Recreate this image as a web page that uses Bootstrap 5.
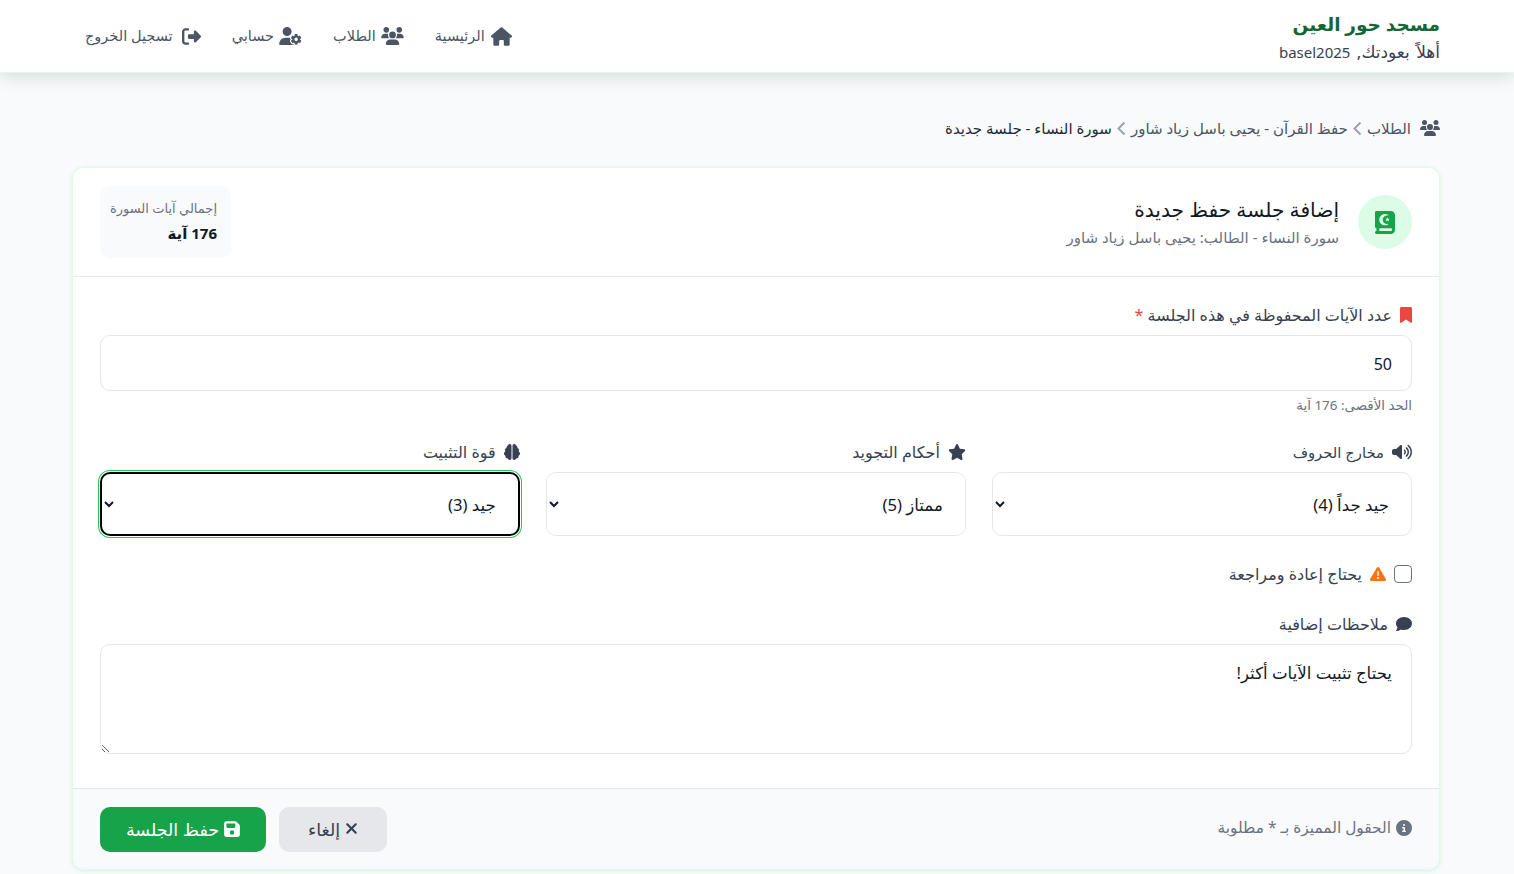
<!DOCTYPE html>
<html lang="ar" dir="rtl">
<head>
<meta charset="utf-8">
<title>إضافة جلسة حفظ جديدة</title>
<link href="https://cdn.jsdelivr.net/npm/bootstrap@5.3.0/dist/css/bootstrap.min.css" rel="stylesheet">
<style>
html,body{height:874px;overflow:hidden}
body{background:#f9fafb;font-family:"Noto Sans","Open Sans","DejaVu Sans",sans-serif;color:#374151;font-size:14px}
.ic{fill:currentColor;display:block;flex:none}
.topbar{height:73px;background:#fff;border-bottom:1px solid #dcfce7;box-shadow:0 4px 16px rgba(0,0,0,.13);padding:0 74px 0 73px;position:relative;z-index:2}
.brand-name{font-size:18.500px;line-height:26px;font-weight:600;color:#166534;margin:0}
.brand-sub{font-size:17px;line-height:20px;color:#374151;margin-top:5px;word-spacing:2px}
.brand-sub bdi{font-size:15px}
.top-nav{gap:31px;padding-left:12px}
.top-link{color:#4b5563;font-size:14.500px;text-decoration:none;gap:5px}
.top-link.home{gap:6px}
.top-link.out{gap:9px}
.wrap{padding:0 74px 0 72px}
.crumbs{height:94px;padding-top:16px;font-size:15px;line-height:20px;color:#4b5563;gap:5px}
.crumbs .lead-ic{margin-left:4px}
.crumbs .cur{color:#1f2937}
.main-card{border:1px solid #dcfce7;border-radius:12px;background:#fff;box-shadow:0 1px 4px rgba(34,197,94,.16);height:703px;overflow:hidden}
.main-head{background:#fff;border-bottom:1px solid #e5e7eb;padding:18px 27px;height:109px}
.icon-disc{width:54px;height:54px;border-radius:50%;background:#dcfce7;color:#16a34a}
.head-gap{gap:19px}
.head-text{padding-bottom:2px}
.head-title{font-size:20.200px;line-height:28px;font-weight:500;color:#111827;margin:0}
.head-sub{font-size:15px;line-height:20px;color:#6b7280;margin-top:4px}
.stat-box{width:131px;height:72px;border-radius:10px;background:#f9fafb;padding:12px 14px 12px 8px}
.stat-label{font-size:13px;line-height:20px;color:#6b7280}
.stat-val{font-size:15px;line-height:20px;font-weight:700;color:#111827;margin-top:5px}
.main-body{padding:28px 27px 0;height:513px}
.fld-label{font-size:16px;line-height:20px;color:#374151;margin:0 0 10px;gap:8px}
.fld-label.tight{font-size:14.800px}
.req{color:#ef4444}
.fld-input{height:56px;border:1px solid #e5e7eb;border-radius:10px;font-size:16px;color:#111827;padding:1px 19px 0;box-shadow:none}
.hint{font-size:13.400px;line-height:16px;color:#6b7280;margin:6px 0 29px}
.trio{--bs-gutter-x:26.500px;margin-bottom:28px}
.fld-select{height:64px;border:1px solid #e5e7eb;border-radius:10px;font-size:16.600px;color:#111827;background-color:#fff;background-image:none;padding:0 18px;appearance:auto;-webkit-appearance:auto;box-shadow:none}
.fld-select.is-on{border:2px solid #000;box-shadow:0 0 0 1px #fff,0 0 0 2px #22c55e}
.chk{width:18px;height:18px;margin:0;float:none;border:1px solid #6b7280;border-radius:3px}
.chk-line{gap:8px;height:20px;margin-bottom:30px;font-size:16px}
.fld-area{height:110px;border:1px solid #e5e7eb;border-radius:10px;font-size:16.600px;color:#111827;padding:16px 19px;box-shadow:none}
.main-foot{height:81px;background:#f9fafb;border-top:1px solid #e5e7eb;padding:18px 27px 0}
.foot-note{color:#6b7280;font-size:15.400px;gap:5px;margin-top:9px}
.act-row{gap:13px}
.act{height:45px;border-radius:10px;font-size:17.500px;gap:5px;border:0;padding:0 0 2px}
.act-cancel{width:108px;background:#e5e7eb;color:#374151}
.act-save{width:166px;background:#16a34a;color:#fff}
</style>
</head>
<body>
<nav class="navbar topbar d-flex justify-content-between align-items-center flex-nowrap">
  <div>
    <h1 class="brand-name">مسجد حور العين</h1>
    <div class="brand-sub">أهلاً بعودتك, <bdi>basel2025</bdi></div>
  </div>
  <div class="d-flex align-items-center top-nav">
    <a href="#" class="d-flex align-items-center top-link home"><svg class="ic" width="21" height="19" viewBox="0 0 576 512"><path d="M575.8 255.500c0 18-15 32.100-32 32.100h-32l.7 160.200c0 2.700-.2 5.400-.5 8.100V472c0 22.100-17.900 40-40 40H456c-1.100 0-2.200 0-3.300-.1c-1.400 .1-2.800 .1-4.200 .1H416 392c-22.100 0-40-17.900-40-40V448 384c0-17.700-14.300-32-32-32H256c-17.700 0-32 14.300-32 32v64 24c0 22.100-17.900 40-40 40H160 128.100c-1.500 0-3-.1-4.500-.2c-1.200 .1-2.400 .2-3.600 .2H104c-22.100 0-40-17.900-40-40V360c0-.9 0-1.900 .1-2.800V287.600H32c-18 0-32-14-32-32.100c0-9 3-17 10-24L266.400 8c7-7 15-8 22-8s15 2 21 7L564.800 231.500c8 7 12 15 11 24z"/></svg>الرئيسية</a>
    <a href="#" class="d-flex align-items-center top-link"><svg class="ic" width="23" height="18" viewBox="0 0 640 512"><path d="M144 0a80 80 0 1 1 0 160A80 80 0 1 1 144 0zM512 0a80 80 0 1 1 0 160A80 80 0 1 1 512 0zM0 298.700C0 239.800 47.800 192 106.700 192h42.700c15.900 0 31 3.500 44.600 9.700c-1.300 7.200-1.900 14.700-1.900 22.300c0 38.200 16.800 72.500 43.300 96c-.2 0-.4 0-.7 0H21.300C9.600 320 0 310.400 0 298.700zM405.300 320c-.2 0-.4 0-.7 0c26.600-23.500 43.300-57.800 43.300-96c0-7.600-.7-15-1.900-22.300c13.600-6.300 28.700-9.700 44.600-9.700h42.700C592.200 192 640 239.800 640 298.700c0 11.800-9.600 21.300-21.300 21.300H405.300zM224 224a96 96 0 1 1 192 0 96 96 0 1 1 -192 0zM128 485.300C128 411.700 187.700 352 261.300 352H378.700C452.300 352 512 411.700 512 485.300c0 14.700-11.900 26.700-26.700 26.700H154.700c-14.700 0-26.700-11.900-26.700-26.700z"/></svg>الطلاب</a>
    <a href="#" class="d-flex align-items-center top-link"><svg class="ic" width="23" height="18" viewBox="0 0 640 512"><path d="M224 0a128 128 0 1 1 0 256A128 128 0 1 1 224 0zM178.300 304h91.400c11.800 0 23.400 1.200 34.500 3.300c-2.100 18.500 7.400 35.600 21.800 44.800c-16.600 10.600-26.700 31.600-20 53.300c4 12.900 9.400 25.500 16.400 37.600s15.200 23.100 24.400 33c15.700 16.900 39.600 18.400 57.200 8.700v.9c0 9.200 2.700 18.500 7.900 26.300H29.700C13.300 512 0 498.700 0 482.300C0 383.800 79.800 304 178.300 304zM436 218.200c0-7 4.500-13.300 11.300-14.800c10.500-2.400 21.500-3.700 32.700-3.700s22.200 1.300 32.700 3.700c6.800 1.500 11.300 7.800 11.300 14.800v30.600c7.900 3.400 15.400 7.700 22.300 12.800l24.900-14.300c6-3.400 13.500-2.500 18.300 2.500c7.600 8.100 14.300 17.200 20.100 27.200s10.300 20.400 13.500 31c2 6.600-1.100 13.600-7.100 17l-24.900 14.300c.4 4 .7 8.100 .7 12.300s-.2 8.200-.7 12.300l24.900 14.300c6 3.400 9.100 10.400 7.100 17c-3.200 10.600-7.700 21-13.500 31s-12.500 19.100-20.100 27.200c-4.800 5.100-12.300 5.900-18.300 2.500l-24.900-14.300c-6.900 5.100-14.300 9.400-22.300 12.800l0 30.600c0 7-4.500 13.300-11.300 14.800c-10.500 2.400-21.500 3.700-32.700 3.700s-22.200-1.300-32.700-3.700c-6.800-1.500-11.300-7.800-11.300-14.800V454.800c-8-3.400-15.600-7.700-22.500-12.900l-24.700 14.300c-6 3.400-13.500 2.500-18.300-2.500c-7.600-8.100-14.300-17.200-20.100-27.200s-10.300-20.400-13.500-31c-2-6.600 1.100-13.600 7.100-17l24.800-14.300c-.4-4.100-.7-8.200-.7-12.400s.2-8.300 .7-12.400L343.800 325c-6-3.400-9.100-10.400-7.100-17c3.200-10.600 7.700-21 13.500-31s12.500-19.100 20.100-27.200c4.800-5.100 12.300-5.900 18.300-2.500l24.800 14.300c6.900-5.100 14.500-9.400 22.500-12.900V218.200zm92.100 133.500a48.100 48.100 0 1 0 -96.100 0 48.100 48.100 0 1 0 96.100 0z"/></svg>حسابي</a>
    <a href="#" class="d-flex align-items-center top-link out"><svg class="ic" width="19" height="19" viewBox="0 0 512 512"><path d="M377.900 105.900L500.700 228.700c7.200 7.200 11.300 17.100 11.300 27.300s-4.100 20.100-11.300 27.300L377.900 406.100c-6.400 6.400-15 9.900-24 9.900c-18.700 0-33.900-15.200-33.900-33.900l0-62.100-128 0c-17.700 0-32-14.300-32-32l0-64c0-17.700 14.300-32 32-32l128 0 0-62.100c0-18.700 15.200-33.900 33.900-33.900c9 0 17.600 3.600 24 9.900zM160 96L96 96c-17.700 0-32 14.300-32 32l0 256c0 17.700 14.300 32 32 32l64 0c17.700 0 32 14.300 32 32s-14.300 32-32 32l-64 0c-53 0-96-43-96-96L0 128C0 75 43 32 96 32l64 0c17.700 0 32 14.300 32 32s-14.300 32-32 32z"/></svg>تسجيل الخروج</a>
  </div>
</nav>
<div class="wrap">
  <div class="d-flex align-items-center crumbs">
    <svg class="ic lead-ic" width="20" height="16" viewBox="0 0 640 512"><path d="M144 0a80 80 0 1 1 0 160A80 80 0 1 1 144 0zM512 0a80 80 0 1 1 0 160A80 80 0 1 1 512 0zM0 298.700C0 239.800 47.800 192 106.700 192h42.700c15.900 0 31 3.500 44.600 9.700c-1.300 7.200-1.900 14.700-1.900 22.300c0 38.200 16.800 72.500 43.300 96c-.2 0-.4 0-.7 0H21.300C9.600 320 0 310.400 0 298.700zM405.300 320c-.2 0-.4 0-.7 0c26.600-23.500 43.300-57.800 43.300-96c0-7.600-.7-15-1.900-22.300c13.600-6.300 28.700-9.700 44.600-9.700h42.700C592.200 192 640 239.800 640 298.700c0 11.800-9.600 21.300-21.300 21.300H405.300zM224 224a96 96 0 1 1 192 0 96 96 0 1 1 -192 0zM128 485.300C128 411.700 187.700 352 261.300 352H378.700C452.300 352 512 411.700 512 485.300c0 14.700-11.900 26.700-26.700 26.700H154.700c-14.700 0-26.700-11.900-26.700-26.700z"/></svg>
    <span>الطلاب</span>
    <svg width="9" height="15" viewBox="0 0 9 15" fill="none" stroke="#9ca3af" stroke-width="2"><path d="M7.5 1.5L1.5 7.5l6 6"/></svg>
    <span>حفظ القرآن - يحيى باسل زياد شاور</span>
    <svg width="9" height="15" viewBox="0 0 9 15" fill="none" stroke="#9ca3af" stroke-width="2"><path d="M7.5 1.5L1.5 7.5l6 6"/></svg>
    <span class="cur">سورة النساء - جلسة جديدة</span>
  </div>

  <div class="card main-card">
    <div class="card-header main-head d-flex justify-content-between align-items-center rounded-0">
      <div class="d-flex align-items-center head-gap">
        <div class="icon-disc d-flex align-items-center justify-content-center">
          <svg class="ic" width="20" height="23" viewBox="0 0 448 512"><path d="M352 0c53 0 96 43 96 96V416c0 53-43 96-96 96H64 32c-17.700 0-32-14.300-32-32s14.300-32 32-32V384c-17.700 0-32-14.300-32-32V32C0 14.300 14.300 0 32 0H64 352zm0 384H96v64H352c17.700 0 32-14.300 32-32s-14.300-32-32-32zM274.100 150.200l-8.900 21.400-23.100 1.900c-5.700 .5-8 7.500-3.700 11.200L256 199.800l-5.400 22.600c-1.300 5.500 4.700 9.900 9.600 6.900L280 217.200l19.800 12.100c4.900 3 10.900-1.400 9.600-6.900L304 199.800l17.600-15.100c4.300-3.700 2-10.800-3.700-11.200l-23.100-1.900-8.900-21.400c-2.200-5.300-9.600-5.300-11.800 0zM96 192c0 70.700 57.300 128 128 128c25.600 0 49.500-7.500 69.500-20.500c3.200-2.100 4.500-6.200 3.100-9.700s-5.200-5.600-9-4.800c-6.100 1.200-12.500 1.900-19 1.900c-52.400 0-94.900-42.500-94.900-94.900s42.500-94.900 94.900-94.900c6.500 0 12.800 .7 19 1.900c3.800 .8 7.500-1.300 9-4.800s.2-7.600-3.100-9.700C273.500 71.500 249.600 64 224 64C153.300 64 96 121.300 96 192z"/></svg>
        </div>
        <div class="head-text">
          <h2 class="head-title">إضافة جلسة حفظ جديدة</h2>
          <div class="head-sub">سورة النساء - الطالب: يحيى باسل زياد شاور</div>
        </div>
      </div>
      <div class="stat-box">
        <div class="stat-label text-nowrap">إجمالي آيات السورة</div>
        <div class="stat-val">176 آية</div>
      </div>
    </div>

    <div class="card-body main-body">
      <label class="form-label d-flex align-items-center fld-label" for="f1">
        <svg class="ic" width="12" height="16" viewBox="0 0 384 512"><path fill="#ef4444" d="M0 48V487.700C0 501.100 10.900 512 24.300 512c5 0 9.900-1.500 14-4.400L192 400 345.700 507.600c4.100 2.900 9 4.400 14 4.400c13.400 0 24.300-10.900 24.300-24.300V48c0-26.500-21.500-48-48-48H48C21.500 0 0 21.500 0 48z"/></svg>
        <span>عدد الآيات المحفوظة في هذه الجلسة <span class="req">*</span></span>
      </label>
      <input id="f1" class="form-control fld-input" type="text" value="50">
      <div class="hint">الحد الأقصى: 176 آية</div>

      <div class="row trio">
        <div class="col-4">
          <label class="form-label d-flex align-items-center fld-label tight"><svg class="ic" width="20" height="16" viewBox="0 0 640 512"><path d="M533.600 32.500C598.500 85.200 640 165.800 640 256s-41.500 170.700-106.400 223.500c-10.300 8.400-25.400 6.800-33.800-3.500s-6.800-25.400 3.500-33.800C557.500 398.200 592 331.200 592 256s-34.500-142.200-88.700-186.300c-10.300-8.400-11.800-23.500-3.500-33.800s23.500-11.800 33.800-3.500zM473.100 107c43.200 35.200 70.900 88.900 70.900 149s-27.700 113.800-70.900 149c-10.300 8.400-25.400 6.800-33.800-3.500s-6.800-25.400 3.500-33.800C475.300 341.300 496 301.100 496 256s-20.700-85.300-53.200-111.800c-10.300-8.400-11.800-23.500-3.500-33.800s23.500-11.800 33.800-3.500zm-60.500 74.500C434.100 199.100 448 225.900 448 256s-13.900 56.900-35.400 74.500c-10.300 8.400-25.400 6.800-33.800-3.500s-6.800-25.400 3.500-33.800C393.100 284.400 400 271 400 256s-6.900-28.400-17.700-37.300c-10.300-8.400-11.800-23.500-3.500-33.800s23.500-11.800 33.800-3.500zM301.100 34.800C312.600 40 320 51.400 320 64V448c0 12.600-7.400 24-18.900 29.200s-25 3.100-34.400-5.300L131.800 352H64c-35.300 0-64-28.700-64-64V224c0-35.300 28.700-64 64-64h67.800L266.700 40.100c9.400-8.400 22.900-10.400 34.400-5.300z"/></svg>مخارج الحروف</label>
          <select class="form-select fld-select"><option>جيد جداً (4)</option></select>
        </div>
        <div class="col-4">
          <label class="form-label d-flex align-items-center fld-label"><svg class="ic" width="18" height="16" viewBox="0 0 576 512"><path d="M316.900 18C311.600 7 300.400 0 288.100 0s-23.400 7-28.800 18L195 150.300 51.400 171.500c-12 1.800-22 10.200-25.700 21.700s-.7 24.200 7.900 32.700L137.800 329 113.200 474.700c-2 12 3 24.200 12.900 31.300s23 8 33.800 2.300l128.300-68.500 128.300 68.500c10.800 5.700 23.900 4.900 33.800-2.300s14.900-19.300 12.900-31.300L438.500 329 542.700 225.900c8.600-8.500 11.700-21.200 7.900-32.700s-13.700-19.900-25.700-21.700L381.200 150.300 316.900 18z"/></svg>أحكام التجويد</label>
          <select class="form-select fld-select"><option>ممتاز (5)</option></select>
        </div>
        <div class="col-4">
          <label class="form-label d-flex align-items-center fld-label"><svg class="ic" width="16" height="16" viewBox="0 0 512 512"><path d="M184 0c30.900 0 56 25.100 56 56V456c0 30.900-25.100 56-56 56c-28.900 0-52.700-21.900-55.700-50.100c-5.200 1.400-10.700 2.100-16.300 2.100c-35.300 0-64-28.700-64-64c0-7.400 1.300-14.600 3.600-21.200C21.400 367.400 0 338.200 0 304c0-31.900 18.700-59.500 45.800-72.300C37.100 220.800 32 207 32 192c0-30.700 21.600-56.300 50.400-62.600C80.800 123.900 80 118 80 112c0-29.900 20.600-55.100 48.300-62.100C131.300 21.900 155.100 0 184 0zM328 0c28.900 0 52.600 21.900 55.700 49.900c27.800 7 48.300 32.100 48.300 62.100c0 6-.8 11.900-2.400 17.400c28.800 6.200 50.400 31.900 50.400 62.600c0 15-5.100 28.800-13.800 39.700C493.300 244.500 512 272.100 512 304c0 34.200-21.400 63.400-51.600 74.800c2.300 6.600 3.600 13.800 3.600 21.200c0 35.300-28.700 64-64 64c-5.600 0-11.100-.7-16.300-2.100c-3 28.200-26.800 50.100-55.700 50.100c-30.900 0-56-25.100-56-56V56c0-30.900 25.100-56 56-56z"/></svg>قوة التثبيت</label>
          <select class="form-select fld-select is-on"><option>جيد (3)</option></select>
        </div>
      </div>

      <div class="d-flex align-items-center chk-line">
        <input class="form-check-input chk" type="checkbox" id="f2">
        <label for="f2" class="d-flex align-items-center gap-2">
          <svg class="ic" width="16" height="16" viewBox="0 0 512 512"><path fill="#f97316" d="M256 32c14.200 0 27.300 7.500 34.500 19.800l216 368c7.300 12.400 7.300 27.700 .2 40.100S486.300 480 472 480H40c-14.300 0-27.600-7.700-34.700-20.100s-7-27.800 .2-40.100l216-368C228.700 39.500 241.800 32 256 32zm0 128c-13.300 0-24 10.700-24 24V296c0 13.300 10.700 24 24 24s24-10.700 24-24V184c0-13.300-10.700-24-24-24zm32 224a32 32 0 1 0 -64 0 32 32 0 1 0 64 0z"/></svg>
          <span>يحتاج إعادة ومراجعة</span>
        </label>
      </div>

      <label class="form-label d-flex align-items-center fld-label" for="f3"><svg class="ic" width="16" height="16" viewBox="0 0 512 512"><path d="M512 240c0 114.900-114.600 208-256 208c-37.100 0-72.300-6.400-104.100-17.900c-11.900 8.700-31.300 20.600-54.300 30.600C73.600 471.100 44.700 480 16 480c-6.500 0-12.300-3.900-14.800-9.900c-2.500-6-1.100-12.800 3.400-17.400l.3-.3c.3-.3 .7-.7 1.300-1.400c1.100-1.200 2.800-3.100 4.900-5.700c4.100-5 9.600-12.400 15.200-21.600c10-16.600 19.500-38.400 21.400-62.900C17.700 326.800 0 285.100 0 240C0 125.100 114.600 32 256 32s256 93.100 256 208z"/></svg>ملاحظات إضافية</label>
      <textarea id="f3" class="form-control fld-area">يحتاج تثبيت الآيات أكثر!</textarea>
    </div>

    <div class="card-footer main-foot d-flex justify-content-between align-items-start rounded-0">
      <div class="d-flex align-items-center foot-note">
        <svg class="ic" width="16" height="16" viewBox="0 0 512 512"><path d="M256 512A256 256 0 1 0 256 0a256 256 0 1 0 0 512zM216 336h24V272H216c-13.300 0-24-10.700-24-24s10.700-24 24-24h48c13.300 0 24 10.700 24 24v88h8c13.300 0 24 10.700 24 24s-10.700 24-24 24H216c-13.300 0-24-10.700-24-24s10.700-24 24-24zm40-208a32 32 0 1 1 0 64 32 32 0 1 1 0-64z"/></svg>
        <span>الحقول المميزة بـ * مطلوبة</span>
      </div>
      <div class="d-flex act-row">
        <button class="btn act act-cancel d-flex align-items-center justify-content-center" type="button"><svg class="ic" width="13" height="17" viewBox="0 0 384 512"><path d="M342.600 150.600c12.500-12.500 12.500-32.800 0-45.300s-32.800-12.500-45.300 0L192 210.700 86.600 105.400c-12.500-12.500-32.800-12.500-45.300 0s-12.500 32.800 0 45.300L146.700 256 41.400 361.400c-12.500 12.500-12.500 32.800 0 45.300s32.800 12.500 45.300 0L192 301.300 297.400 406.600c12.500 12.500 32.800 12.500 45.300 0s12.500-32.800 0-45.300L237.300 256 342.600 150.600z"/></svg>إلغاء</button>
        <button class="btn act act-save d-flex align-items-center justify-content-center" type="button"><svg class="ic" width="16" height="18" viewBox="0 0 448 512"><path d="M64 32C28.700 32 0 60.700 0 96V416c0 35.300 28.700 64 64 64H384c35.300 0 64-28.700 64-64V173.300c0-17-6.700-33.300-18.700-45.300L352 50.700C340 38.700 323.700 32 306.700 32H64zm0 96c0-17.700 14.300-32 32-32H288c17.700 0 32 14.300 32 32v64c0 17.700-14.300 32-32 32H96c-17.700 0-32-14.300-32-32V128zM224 288a64 64 0 1 1 0 128 64 64 0 1 1 0-128z"/></svg>حفظ الجلسة</button>
      </div>
    </div>
  </div>
</div>
<script src="https://cdn.jsdelivr.net/npm/bootstrap@5.3.0/dist/js/bootstrap.bundle.min.js"></script>
</body>
</html>
